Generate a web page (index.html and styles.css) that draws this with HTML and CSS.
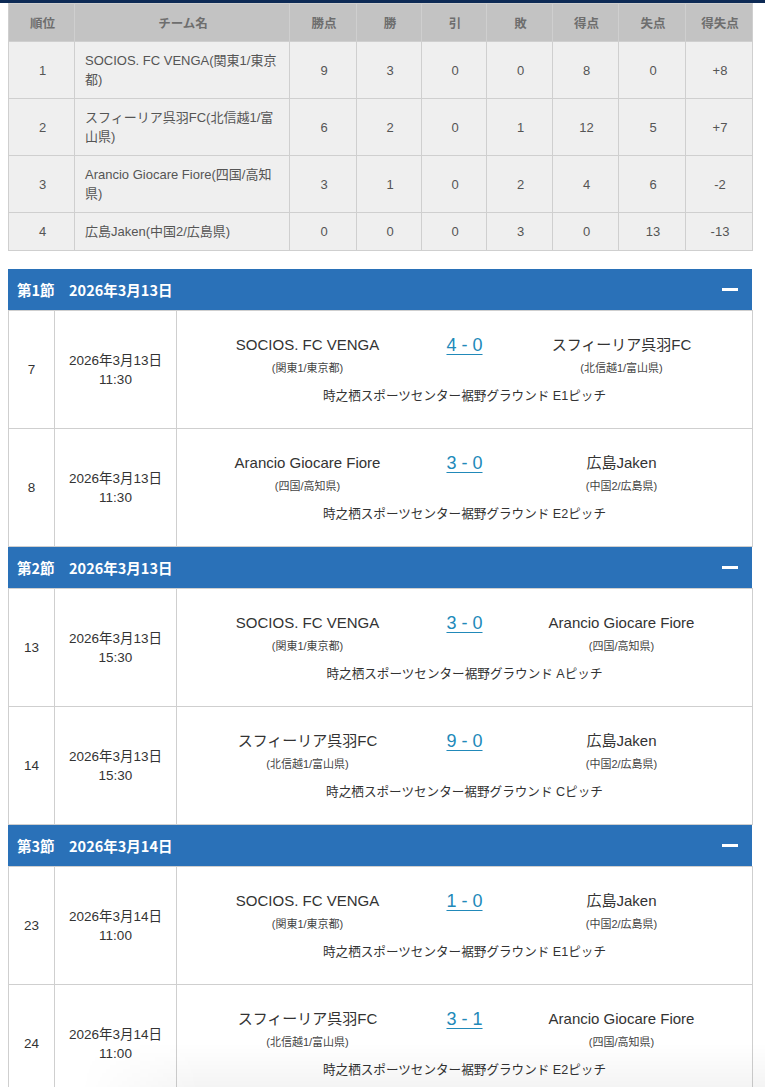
FILE: index.html
```html
<!DOCTYPE html>
<html lang="ja">
<head>
<meta charset="utf-8">
<title>順位表・試合結果</title>
<link rel="stylesheet" href="styles.css">
</head>
<body>
<div class="topbar"></div>
<main class="page">
  <table class="standings">
    <colgroup>
      <col class="c-rank"><col class="c-team"><col class="c-pt"><col class="c-w"><col class="c-d"><col class="c-l"><col class="c-gf"><col class="c-ga"><col class="c-gd">
    </colgroup>
    <thead>
      <tr><th>順位</th><th>チーム名</th><th>勝点</th><th>勝</th><th>引</th><th>敗</th><th>得点</th><th>失点</th><th>得失点</th></tr>
    </thead>
    <tbody>
      <tr><td>1</td><td class="tname">SOCIOS. FC VENGA(関東1/東京<br>都)</td><td>9</td><td>3</td><td>0</td><td>0</td><td>8</td><td>0</td><td>+8</td></tr>
      <tr><td>2</td><td class="tname">スフィーリア呉羽FC(北信越1/富<br>山県)</td><td>6</td><td>2</td><td>0</td><td>1</td><td>12</td><td>5</td><td>+7</td></tr>
      <tr><td>3</td><td class="tname">Arancio Giocare Fiore(四国/高知<br>県)</td><td>3</td><td>1</td><td>0</td><td>2</td><td>4</td><td>6</td><td>-2</td></tr>
      <tr><td>4</td><td class="tname">広島Jaken(中国2/広島県)</td><td>0</td><td>0</td><td>0</td><td>3</td><td>0</td><td>13</td><td>-13</td></tr>
    </tbody>
  </table>

  <section class="round">
    <div class="round-head"><span class="round-title">第1節　2026年3月13日</span><span class="minus"></span></div>
    <table class="matches">
      <colgroup><col class="m-no"><col class="m-date"><col class="m-body"></colgroup>
      <tr>
        <td class="no">7</td>
        <td class="date">2026年3月13日<br>11:30</td>
        <td class="body">
          <div class="teams">
            <div class="team"><div class="name">SOCIOS. FC VENGA</div><div class="area">(関東1/東京都)</div></div>
            <div class="score"><a href="#">4 - 0</a></div>
            <div class="team"><div class="name">スフィーリア呉羽FC</div><div class="area">(北信越1/富山県)</div></div>
          </div>
          <div class="venue">時之栖スポーツセンター裾野グラウンド E1ピッチ</div>
        </td>
      </tr>
      <tr>
        <td class="no">8</td>
        <td class="date">2026年3月13日<br>11:30</td>
        <td class="body">
          <div class="teams">
            <div class="team"><div class="name">Arancio Giocare Fiore</div><div class="area">(四国/高知県)</div></div>
            <div class="score"><a href="#">3 - 0</a></div>
            <div class="team"><div class="name">広島Jaken</div><div class="area">(中国2/広島県)</div></div>
          </div>
          <div class="venue">時之栖スポーツセンター裾野グラウンド E2ピッチ</div>
        </td>
      </tr>
    </table>
  </section>

  <section class="round">
    <div class="round-head"><span class="round-title">第2節　2026年3月13日</span><span class="minus"></span></div>
    <table class="matches">
      <colgroup><col class="m-no"><col class="m-date"><col class="m-body"></colgroup>
      <tr>
        <td class="no">13</td>
        <td class="date">2026年3月13日<br>15:30</td>
        <td class="body">
          <div class="teams">
            <div class="team"><div class="name">SOCIOS. FC VENGA</div><div class="area">(関東1/東京都)</div></div>
            <div class="score"><a href="#">3 - 0</a></div>
            <div class="team"><div class="name">Arancio Giocare Fiore</div><div class="area">(四国/高知県)</div></div>
          </div>
          <div class="venue">時之栖スポーツセンター裾野グラウンド Aピッチ</div>
        </td>
      </tr>
      <tr>
        <td class="no">14</td>
        <td class="date">2026年3月13日<br>15:30</td>
        <td class="body">
          <div class="teams">
            <div class="team"><div class="name">スフィーリア呉羽FC</div><div class="area">(北信越1/富山県)</div></div>
            <div class="score"><a href="#">9 - 0</a></div>
            <div class="team"><div class="name">広島Jaken</div><div class="area">(中国2/広島県)</div></div>
          </div>
          <div class="venue">時之栖スポーツセンター裾野グラウンド Cピッチ</div>
        </td>
      </tr>
    </table>
  </section>

  <section class="round">
    <div class="round-head"><span class="round-title">第3節　2026年3月14日</span><span class="minus"></span></div>
    <table class="matches">
      <colgroup><col class="m-no"><col class="m-date"><col class="m-body"></colgroup>
      <tr>
        <td class="no">23</td>
        <td class="date">2026年3月14日<br>11:00</td>
        <td class="body">
          <div class="teams">
            <div class="team"><div class="name">SOCIOS. FC VENGA</div><div class="area">(関東1/東京都)</div></div>
            <div class="score"><a href="#">1 - 0</a></div>
            <div class="team"><div class="name">広島Jaken</div><div class="area">(中国2/広島県)</div></div>
          </div>
          <div class="venue">時之栖スポーツセンター裾野グラウンド E1ピッチ</div>
        </td>
      </tr>
      <tr>
        <td class="no">24</td>
        <td class="date">2026年3月14日<br>11:00</td>
        <td class="body">
          <div class="teams">
            <div class="team"><div class="name">スフィーリア呉羽FC</div><div class="area">(北信越1/富山県)</div></div>
            <div class="score"><a href="#">3 - 1</a></div>
            <div class="team"><div class="name">Arancio Giocare Fiore</div><div class="area">(四国/高知県)</div></div>
          </div>
          <div class="venue">時之栖スポーツセンター裾野グラウンド E2ピッチ</div>
        </td>
      </tr>
    </table>
  </section>
</main>
<div class="bottom-shade"></div>
</body>
</html>
```

FILE: styles.css
```css
html, body {
  margin: 0;
  padding: 0;
  background: #fff;
}
body {
  font-family: "Liberation Sans", "Noto Sans CJK JP", sans-serif;
  color: #333;
}
.topbar {
  height: 3px;
  background: #0d2a55;
}
.page {
  padding: 0 13px 0 8px;
}

/* standings */
.standings {
  width: 744px;
  border-collapse: collapse;
  table-layout: fixed;
  font-size: 13px;
  line-height: 19px;
  color: #555;
}
.c-rank { width: 66px; }
.c-team { width: 215px; }
.c-pt { width: 67px; }
.c-w { width: 65px; }
.c-d { width: 65px; }
.c-l { width: 66px; }
.c-gf { width: 66px; }
.c-ga { width: 67px; }
.c-gd { width: 67px; }
.standings th,
.standings td {
  border: 1px solid #cfcfcf;
  padding: 9px 8px 9px 10px;
  text-align: center;
  vertical-align: middle;
}
.standings th {
  background: #c3c3c3;
  color: #6e6e6e;
  font-family: "Noto Sans CJK JP", sans-serif;
  font-weight: bold;
  font-size: 12.5px;
}
.standings td {
  background: #efefef;
}
.standings td.tname {
  text-align: left;
  white-space: nowrap;
}

/* rounds */
.standings + .round {
  margin-top: 18px;
}
.round-head {
  width: 744px;
  box-sizing: border-box;
  height: 41px;
  background: #2a71b8;
  color: #fff;
  display: flex;
  align-items: center;
  justify-content: space-between;
  padding: 0 14px 0 9px;
}
.round-title {
  font-family: "Noto Sans CJK JP", sans-serif;
  font-weight: bold;
  font-size: 14.5px;
}
.minus {
  width: 16px;
  height: 3px;
  background: #fff;
}
.matches {
  width: 744px;
  border-collapse: collapse;
  table-layout: fixed;
  font-size: 13.5px;
  line-height: 19px;
  color: #333;
}
.m-no { width: 46px; }
.m-date { width: 122px; }
.m-body { width: 576px; }
.matches td {
  border: 1px solid #cfcfcf;
  text-align: center;
  vertical-align: middle;
  padding: 0;
}
.matches td.body {
  padding: 24px 0 23px;
}
.teams {
  display: grid;
  grid-template-columns: repeat(3, 157px);
  justify-content: center;
}
.name {
  font-size: 15px;
  line-height: 20px;
  color: #333;
}
.area {
  margin-top: 5px;
  font-size: 11px;
  line-height: 16px;
  color: #444;
}
.score {
  font-size: 18px;
  line-height: 20px;
}
.score a {
  color: #2189b9;
  text-decoration: underline;
  text-underline-offset: 3px;
}
.venue {
  margin-top: 11px;
  font-size: 12.6px;
  line-height: 18px;
  color: #333;
}
.bottom-shade {
  position: fixed;
  left: 0;
  right: 0;
  bottom: 0;
  height: 44px;
  background: linear-gradient(to bottom, rgba(0,0,0,0), rgba(0,0,0,0.045));
  -webkit-mask-image: linear-gradient(to right, transparent 80px, #000 200px);
  mask-image: linear-gradient(to right, transparent 80px, #000 200px);
  pointer-events: none;
}
```
